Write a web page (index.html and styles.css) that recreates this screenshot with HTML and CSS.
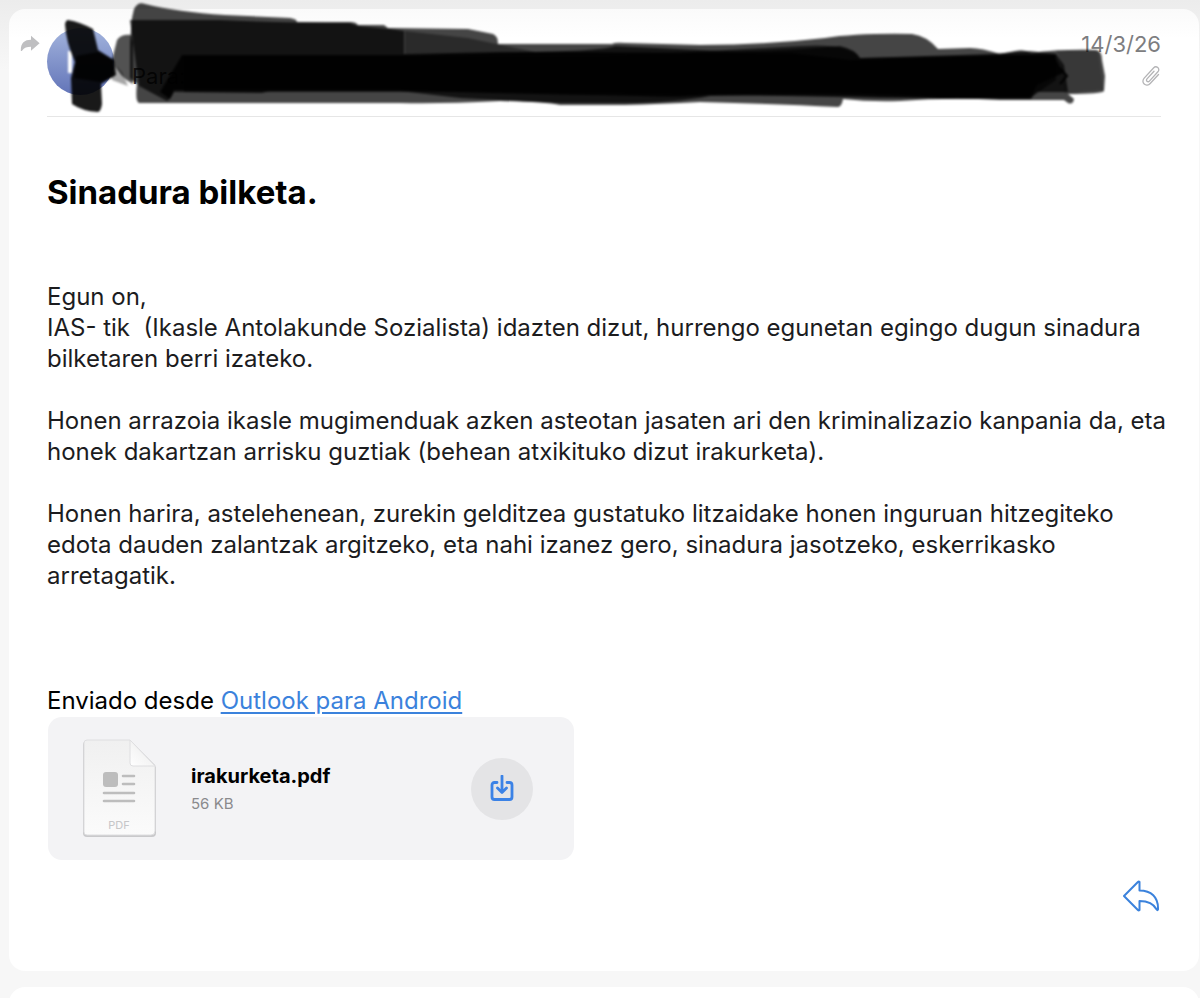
FILE: index.html
```html
<!DOCTYPE html>
<html lang="eu">
<head>
<meta charset="utf-8">
<title>Sinadura bilketa.</title>
<link rel="stylesheet" href="styles.css">
</head>
<body>
<main class="thread">
  <article class="card message">
    <header class="message-header">
      <svg class="forwarded" viewBox="0 0 20 17" aria-hidden="true"><path d="M11 .8v4C4.500 4.800.8 8 .8 15.500c0 .7.8.7 1.200.2C4.200 12.800 7 11.800 11 11.800v4l8.600-7.500z" fill="#bfbfc1"/></svg>
      <div class="avatar"></div>
      <div class="sender">
        <span class="recipients">Para:</span>
      </div>
      <div class="meta">
        <time datetime="2026-03-14">14/3/26</time>
        <svg class="clip" viewBox="0 0 20 22" aria-hidden="true"><path d="M17.500 9.500l-8.300 9c-1.700 1.800-4.300 2.100-6 .6s-1.700-4.100 0-6L12.500 3c1.200-1.300 3-1.500 4.300-.4s1.300 2.900.1 4.200l-8.500 9.300c-.7.8-1.700.8-2.400.2s-.7-1.600 0-2.400l7-7.700" fill="none" stroke="#b4b4b6" stroke-width="1.300" stroke-linecap="round"/></svg>
      </div>
      <svg class="marker" viewBox="0 0 1110 116" aria-hidden="true">
        <path d="M68 51h4v22h-4z" fill="#fff"/>
        <g fill="#000">
          <path opacity=".9" d="M68 20Q80 22 93 29L98 50L114 60L116 75L101 84L102 104Q101 111 98 112Q82 111 72 104L71 78L75 62Q66 42 65 24Q66 20 68 20z"/>
          <path opacity=".8" d="M76 56L98 52L113 60L114 76L100 82L74 78z"/>
          <path opacity=".35" d="M110 60L122 72L128 86L112 80z"/>
          <path opacity=".68" d="M112 60L117 40Q121 34 131 35L133 42V84Q120 78 112 60z"/>
          <path opacity=".73" d="M132 18L134 9Q138 1 145 4Q178 12 225 15L290 18Q297 19 297 22L350 22Q356 22 358 25L384 25L388 28L468 29L493 34Q498 36 498 44H612Q615 42 625 43L700 45Q765 45 825 38Q858 33 912 34Q927 36 938 49L970 48Q982 48 1000 54L1015 51Q1025 49 1031 53Q1060 49 1096 50Q1102 51 1102 60L1105 76L1104 91Q1102 94 1068 94L1074 99Q1073 105 1068 103L1064 100L1000 100Q950 97 900 101Q870 102 843 99Q842 106 838 107Q780 104 700 102Q660 104 625 105H560Q545 102 500 101Q440 104 400 103H139Q135 102 137 84L130 78V42z"/>
          <path opacity=".72" d="M130 20L220 20Q290 23 350 23L358 26L390 29L404 31V54L500 52Q600 52 615 46L720 51Q780 52 840 46Q855 49 860 58L990 54L1030 51L1056 54L1064 65L1068 92L1036 92L1031 99H940Q850 94 710 96Q675 103 625 103H558L460 98L400 91H270L262 93L174 92Q171 99 167 101L139 86Z"/>
          <path opacity=".88" d="M182 55H400L540 52L790 53L850 60L1008 55L1054 55L1063 73L1037 85L1030 98H950Q860 91 710 95Q680 98 640 96Q500 94 400 90H174L170 99L160 92z"/>
          <path opacity=".4" d="M405 31L468 38L540 53L405 54z"/>
          <path opacity=".65" d="M800 46Q850 43 860 58L1056 54V80L1030 98H880L600 92H184V57L600 57z"/>
          <path opacity=".2" d="M1056 50L1098 51L1104 90L1064 93L1062 64z"/>
        </g>
        <path d="M1060 68l7 8-7 8" fill="none" stroke="#000" stroke-width="2"/>
      </svg>
    </header>
    <h1 class="subject">Sinadura bilketa.</h1>
    <div class="body">
      <p>Egun on,<br>IAS- tik&nbsp; (Ikasle Antolakunde Sozialista) idazten dizut, hurrengo egunetan egingo dugun sinadura bilketaren berri izateko.</p>
      <p>Honen arrazoia ikasle mugimenduak azken asteotan jasaten ari den kriminalizazio kanpania da, eta honek dakartzan arrisku guztiak (behean atxikituko dizut irakurketa).</p>
      <p>Honen harira, astelehenean, zurekin gelditzea gustatuko litzaidake honen inguruan hitzegiteko edota dauden zalantzak argitzeko, eta nahi izanez gero, sinadura jasotzeko, eskerrikasko arretagatik.</p>
    </div>
    <p class="signature">Enviado desde <a href="#">Outlook para Android</a></p>
    <section class="attachment">
      <svg class="file" viewBox="0 0 78 102" aria-hidden="true">
        <defs>
          <linearGradient id="paper" x1="0" y1="0" x2="0" y2="1"><stop offset="0" stop-color="#f0f0f0"/><stop offset="1" stop-color="#fbfbfb"/></linearGradient>
          <linearGradient id="fold" x1="0" y1="1" x2="1" y2="0"><stop offset="0" stop-color="#fff"/><stop offset="1" stop-color="#e8e8e8"/></linearGradient>
        </defs>
        <path d="M6 3h43l26 26v66q0 4-4 4H6q-4 0-4-4V7q0-4 4-4z" fill="#c9c9cb"/>
        <path d="M6 2h43l25 25v66q0 4-4 4H6q-3 0-3-3V5q0-3 3-3z" fill="url(#paper)" stroke="#dedee0"/>
        <path d="M49 2l25 26H52q-3 0-3-3z" fill="url(#fold)" stroke="#dedee0"/>
        <rect x="22" y="34" width="15" height="15" rx="3" fill="#bdbdbd"/>
        <path d="M42 38h11M42 46h11M23 55h30M23 63h30" stroke="#bdbdbd" stroke-width="2.600" stroke-linecap="round"/>
        <text class="file-kind" x="38" y="91" text-anchor="middle">PDF</text>
      </svg>
      <div class="file-info">
        <strong class="file-name">irakurketa.pdf</strong>
        <span class="file-size">56 KB</span>
      </div>
      <button class="download" type="button" aria-label="Descargar">
        <svg viewBox="0 0 24 28" aria-hidden="true"><path d="M7 7.500H4.500q-2.500 0-2.500 2.500v12q0 2.500 2.500 2.500h15q2.500 0 2.500-2.500V10q0-2.500-2.500-2.500H17M12 1v16M7.500 13l4.500 4.500 4.500-4.500" fill="none" stroke="#3b82e6" stroke-width="2.800" stroke-linecap="round" stroke-linejoin="round"/></svg>
      </button>
    </section>
    <footer class="actions">
      <button class="reply" type="button" aria-label="Responder">
        <svg viewBox="0 0 38 32" aria-hidden="true"><path d="M16.500 2v8.500C28 10.500 35.500 17 35 29.500q-.5 1.300-1.300 0C30.500 23.500 25 21 16.500 21v9q-.8.8-1.600 0L1 16 14.900 2q.9-.8 1.600 0z" fill="none" stroke="#3b82dc" stroke-width="2" stroke-linejoin="round"/></svg>
      </button>
    </footer>
  </article>
  <article class="card next-message"></article>
</main>
</body>
</html>
```
FILE: styles.css
```css
* { box-sizing: border-box; }
body {
  margin: 0;
  min-height: 100vh;
  background: linear-gradient(#ececec, #f7f7f7 70px);
  color: #1c1c1e;
  font-family: Inter, "Liberation Sans", sans-serif;
  font-size: 24px;
  line-height: 31px;
}
h1, p { margin: 0; }
button { padding: 0; border: 0; background: none; cursor: pointer; }
.thread {
  display: flex;
  flex-direction: column;
  gap: 16px;
  height: 100vh;
  min-height: 998px;
  overflow: hidden;
  padding: 9px 1px 0 9px;
}
.card { border-radius: 16px; background: #fff; }
.message {
  padding: 0 38px 59px;
  background: linear-gradient(#fafafa, #fff 30px);
}
.message-header {
  position: relative;
  display: flex;
  gap: 18px;
  height: 108px;
  padding-top: 19px;
  border-bottom: 1px solid #e6e6e6;
}
.forwarded { position: absolute; left: -27px; top: 26px; width: 20px; height: 17px; }
.avatar {
  width: 67px;
  height: 67px;
  border-radius: 50%;
  background: linear-gradient(#a3b4dd, #6274b8);
}
.sender { flex: 1; padding-top: 32px; }
.recipients { font-size: 22px; color: #3c3c3e; }
.meta {
  display: flex;
  flex-direction: column;
  align-items: flex-end;
  gap: 5px;
  color: #7d7d80;
  font-size: 22px;
}
.meta time { line-height: 32px; }
.clip { width: 20px; height: 22px; }
.marker {
  position: absolute;
  left: -47px;
  top: -9px;
  width: 1110px;
  height: 116px;
  filter: blur(1px);
}
.subject {
  padding: 55px 0 69px;
  color: #000;
  font-size: 33px;
  font-weight: 700;
  line-height: 40px;
}
.body { display: flex; flex-direction: column; gap: 31px; margin-right: -20px; }
.signature { margin-top: 94px; padding-bottom: 1px; color: #000; }
.signature a { color: #3b82dc; text-decoration-thickness: 2px; text-underline-offset: 3px; }
.attachment {
  display: flex;
  align-items: center;
  max-width: 526px;
  height: 143px;
  margin: 0 0 20px 1px;
  padding: 0 41px 0 33px;
  border-radius: 14px;
  background: #f3f3f5;
}
.file { width: 78px; height: 102px; }
.file-kind { fill: #c6c6c8; font-size: 11px; }
.file-info { display: flex; flex: 1; flex-direction: column; padding-left: 32px; }
.file-name { color: #000; font-size: 20px; font-weight: 700; line-height: 30px; }
.file-size { color: #8a8a8d; font-size: 15px; line-height: 26px; }
.download {
  display: grid;
  place-items: center;
  width: 62px;
  height: 62px;
  border-radius: 50%;
  background: #e4e4e6;
}
.download svg { width: 24px; height: 28px; }
.actions { display: flex; justify-content: flex-end; }
.reply { display: flex; }
.reply svg { width: 38px; height: 32px; }
.next-message { flex: none; height: 100px; }
```
